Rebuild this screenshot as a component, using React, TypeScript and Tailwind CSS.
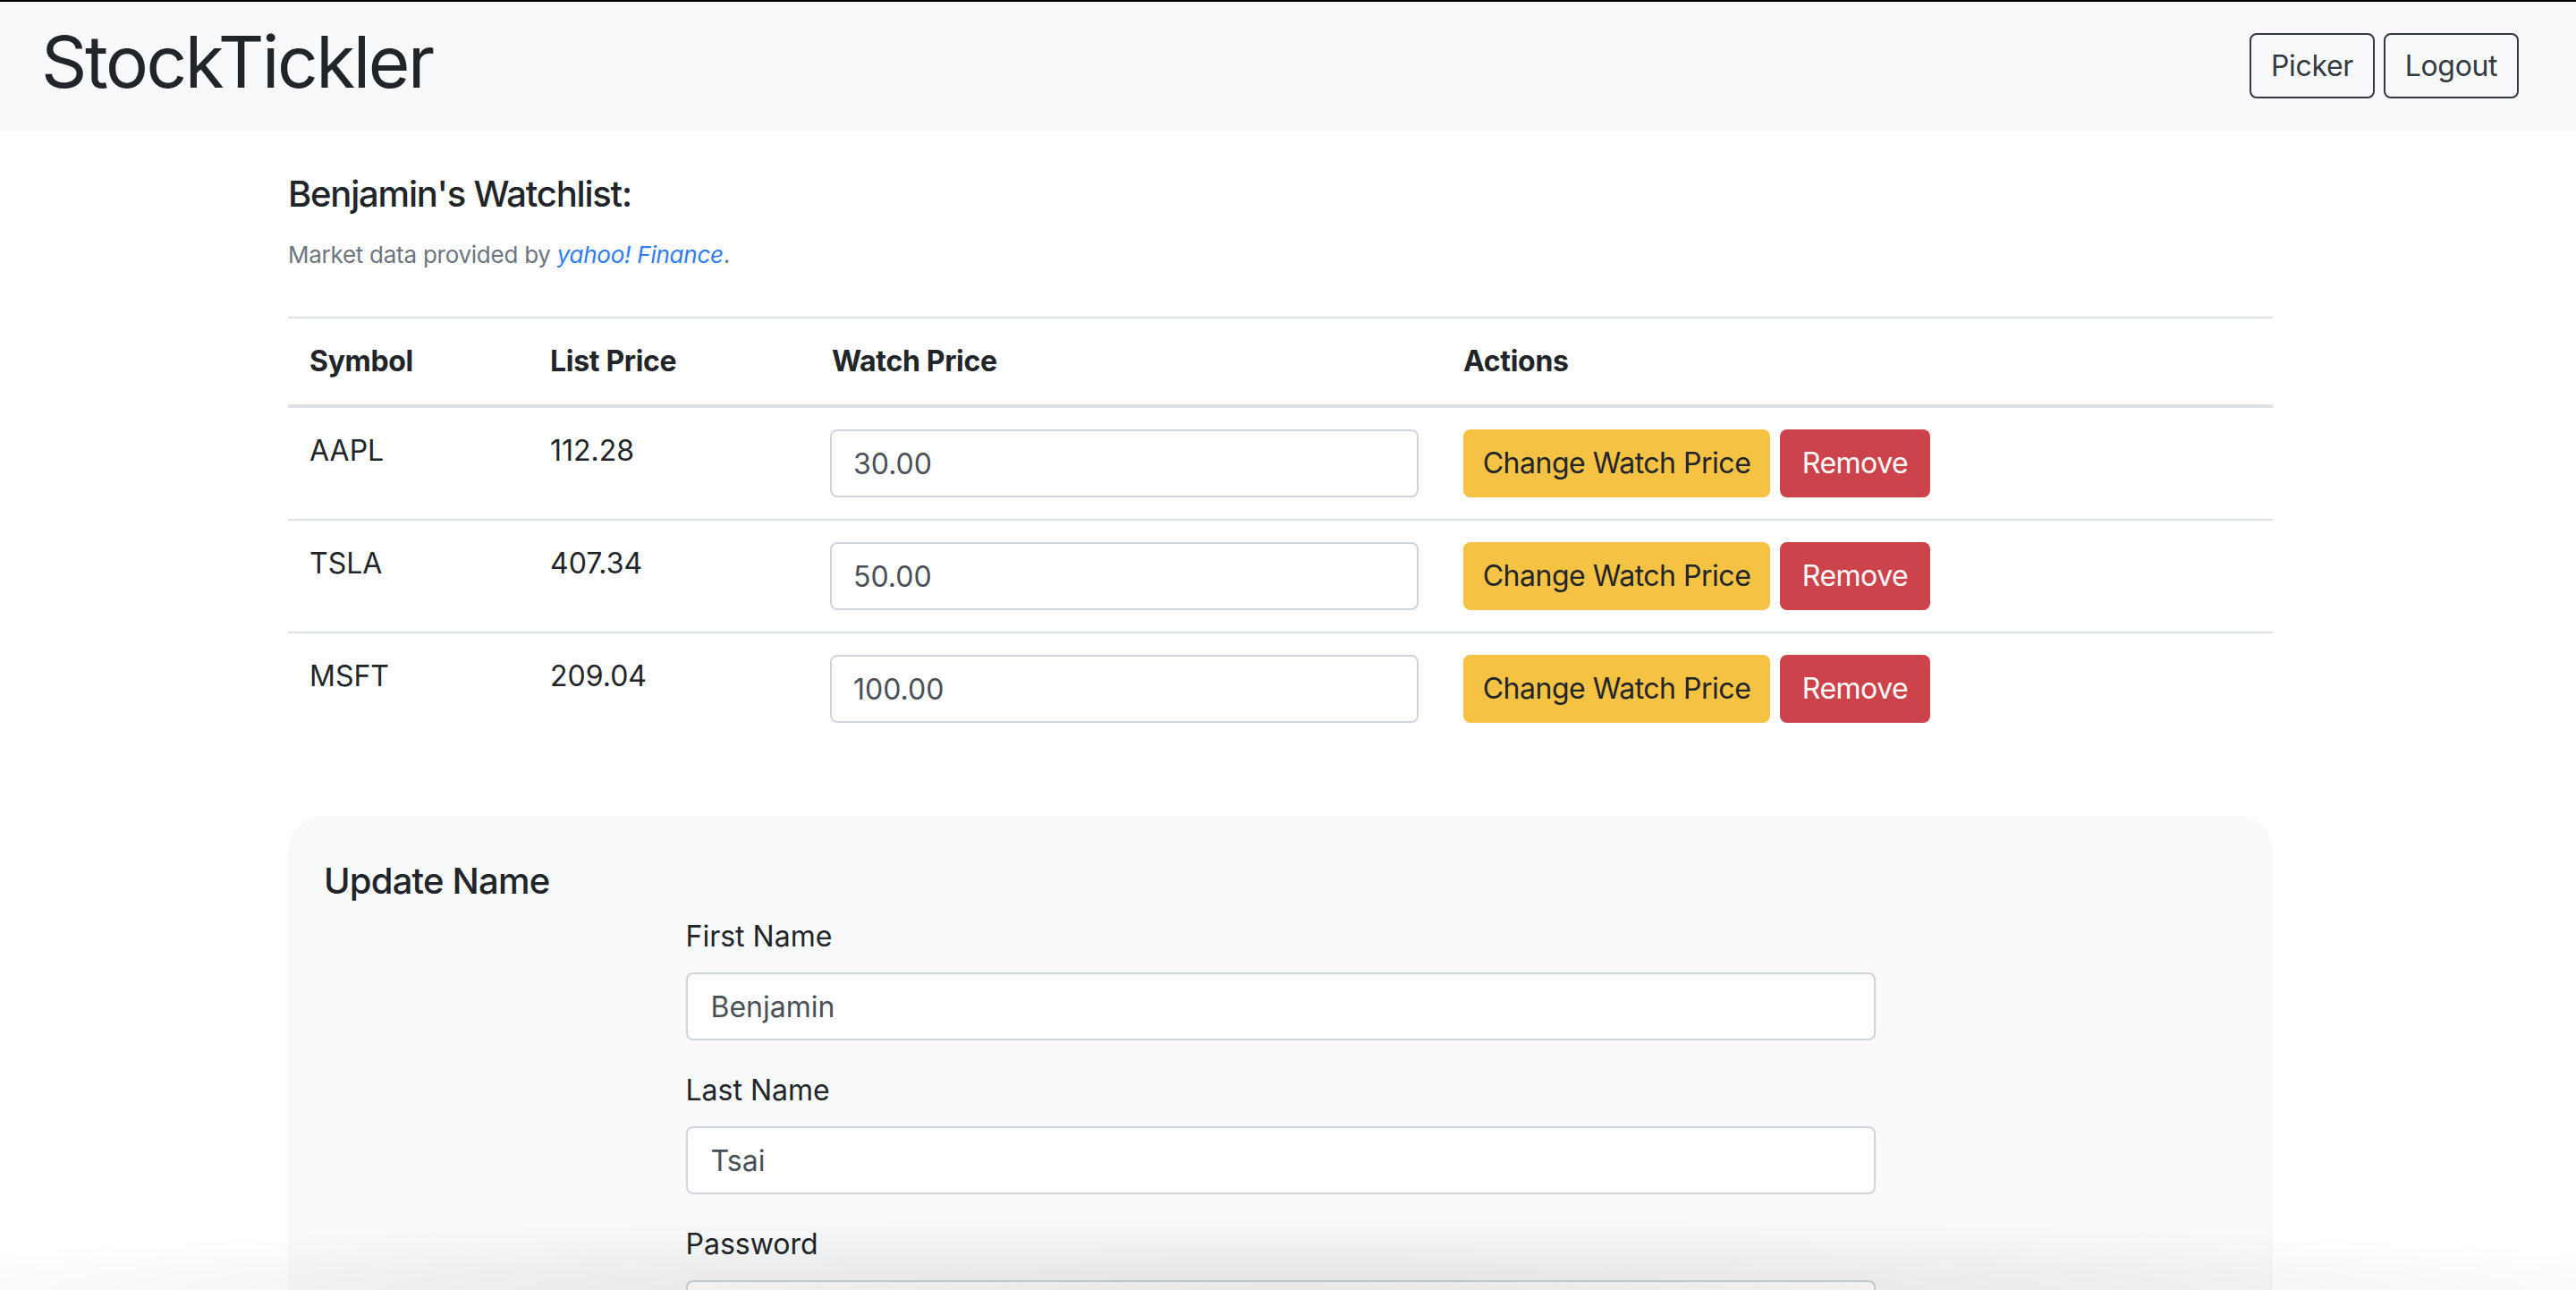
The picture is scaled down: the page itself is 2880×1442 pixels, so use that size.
import React from "react";

interface WatchItem {
  symbol: string;
  listPrice: string;
  watchPrice: string;
}

const watchlist: WatchItem[] = [
  { symbol: "AAPL", listPrice: "112.28", watchPrice: "30.00" },
  { symbol: "TSLA", listPrice: "407.34", watchPrice: "50.00" },
  { symbol: "MSFT", listPrice: "209.04", watchPrice: "100.00" },
];

const font = { fontFamily: "Inter, 'Liberation Sans', sans-serif" };

function Navbar() {
  return (
    <nav className="flex h-[145px] items-center justify-between border-t-2 border-black bg-[#f8f9fa] pl-[46px] pr-[64px]">
      <h1 className="-mt-[10px] text-[80px] font-normal leading-[1.2] tracking-[-0.03em] text-[#212529]">StockTickler</h1>
      <div className="flex gap-[10px]">
        <button className="h-[73px] w-[140px] rounded-[8px] border-2 border-[#343a40] text-[32px] tracking-[-0.01em] text-[#343a40]">Picker</button>
        <button className="h-[73px] w-[151px] rounded-[8px] border-2 border-[#343a40] text-[32px] tracking-[-0.01em] text-[#343a40]">Logout</button>
      </div>
    </nav>
  );
}

function WatchRow({ item }: { item: WatchItem }) {
  return (
    <tr className="align-top">
      <td className="border-t-2 border-[#dee2e6] px-[24px] py-[24px] leading-[48px]">{item.symbol}</td>
      <td className="border-t-2 border-[#dee2e6] px-[24px] py-[24px] leading-[48px]">{item.listPrice}</td>
      <td className="border-t-2 border-[#dee2e6] py-[24px] pl-[22px] pr-[24px]">
        <input
          defaultValue={item.watchPrice}
          className="h-[76px] w-[658px] rounded-[8px] border-2 border-[#ced4da] bg-white px-[24px] text-[32px] text-[#495057] outline-none"
        />
      </td>
      <td className="border-t-2 border-[#dee2e6] px-[24px] py-[24px]">
        <div className="flex gap-[11px]">
          <button className="h-[76px] w-[343px] rounded-[8px] bg-[#f6c244] text-[32px] tracking-[-0.015em] text-[#212529]">Change Watch Price</button>
          <button className="h-[76px] w-[168px] rounded-[8px] bg-[#cc434b] text-[32px] tracking-[-0.015em] text-white">Remove</button>
        </div>
      </td>
    </tr>
  );
}

function Field({ label, value, type = "text" }: { label: string; value: string; type?: string }) {
  return (
    <div className="mb-[32px]">
      <label className="mb-[16px] block text-[32px] leading-[48px] text-[#212529]">{label}</label>
      <input
        type={type}
        defaultValue={value}
        className="h-[76px] w-full rounded-[8px] border-2 border-[#ced4da] bg-white px-[26px] text-[32px] text-[#495057] outline-none"
      />
    </div>
  );
}

export default function App() {
  return (
    <div className="min-h-[1442px] bg-white text-[32px] text-[#212529]" style={font}>
      <Navbar />

      <main className="ml-[322px] w-[2219px]">
        <h5 className="mt-[48px] text-[40px] font-medium leading-[48px] tracking-[-0.03em]">Benjamin's Watchlist:</h5>
        <p className="mt-[23px] text-[26px] leading-[42px] tracking-[-0.01em] text-[#6c757d]">
          Market data provided by{" "}
          <a href="#" className="italic text-[#2f7cf6]">yahoo! Finance</a>.
        </p>

        <table className="mt-[48px] w-full table-fixed border-collapse text-left">
          <thead>
            <tr>
              <th className="w-[269px] border-b-4 border-t-2 border-[#dee2e6] px-[24px] py-[24px] font-bold leading-[48px] tracking-[-0.01em]">Symbol</th>
              <th className="w-[315px] border-b-4 border-t-2 border-[#dee2e6] px-[24px] py-[24px] font-bold leading-[48px] tracking-[-0.01em]">List Price</th>
              <th className="w-[706px] border-b-4 border-t-2 border-[#dee2e6] px-[24px] py-[24px] font-bold leading-[48px] tracking-[-0.01em]">Watch Price</th>
              <th className="border-b-4 border-t-2 border-[#dee2e6] px-[24px] py-[24px] font-bold leading-[48px] tracking-[-0.01em]">Actions</th>
            </tr>
          </thead>
          <tbody>
            {watchlist.map((item) => (
              <WatchRow key={item.symbol} item={item} />
            ))}
          </tbody>
        </table>

        <section className="mt-[80px] rounded-[40px] bg-[#f8f9fa] px-[40px] pb-[48px] pt-[49px]">
          <h4 className="text-[40px] font-medium leading-[48px] tracking-[-0.02em]">Update Name</h4>
          <form className="mx-auto mt-[14px] w-[1330px]">
            <Field label="First Name" value="Benjamin" />
            <Field label="Last Name" value="Tsai" />
            <Field label="Password" value="" type="password" />
          </form>
        </section>
      </main>

      <div className="pointer-events-none fixed inset-x-0 bottom-0 h-[80px] bg-[radial-gradient(ellipse_60%_100%_at_50%_100%,rgba(0,0,0,0.09),transparent)]" />
    </div>
  );
}
